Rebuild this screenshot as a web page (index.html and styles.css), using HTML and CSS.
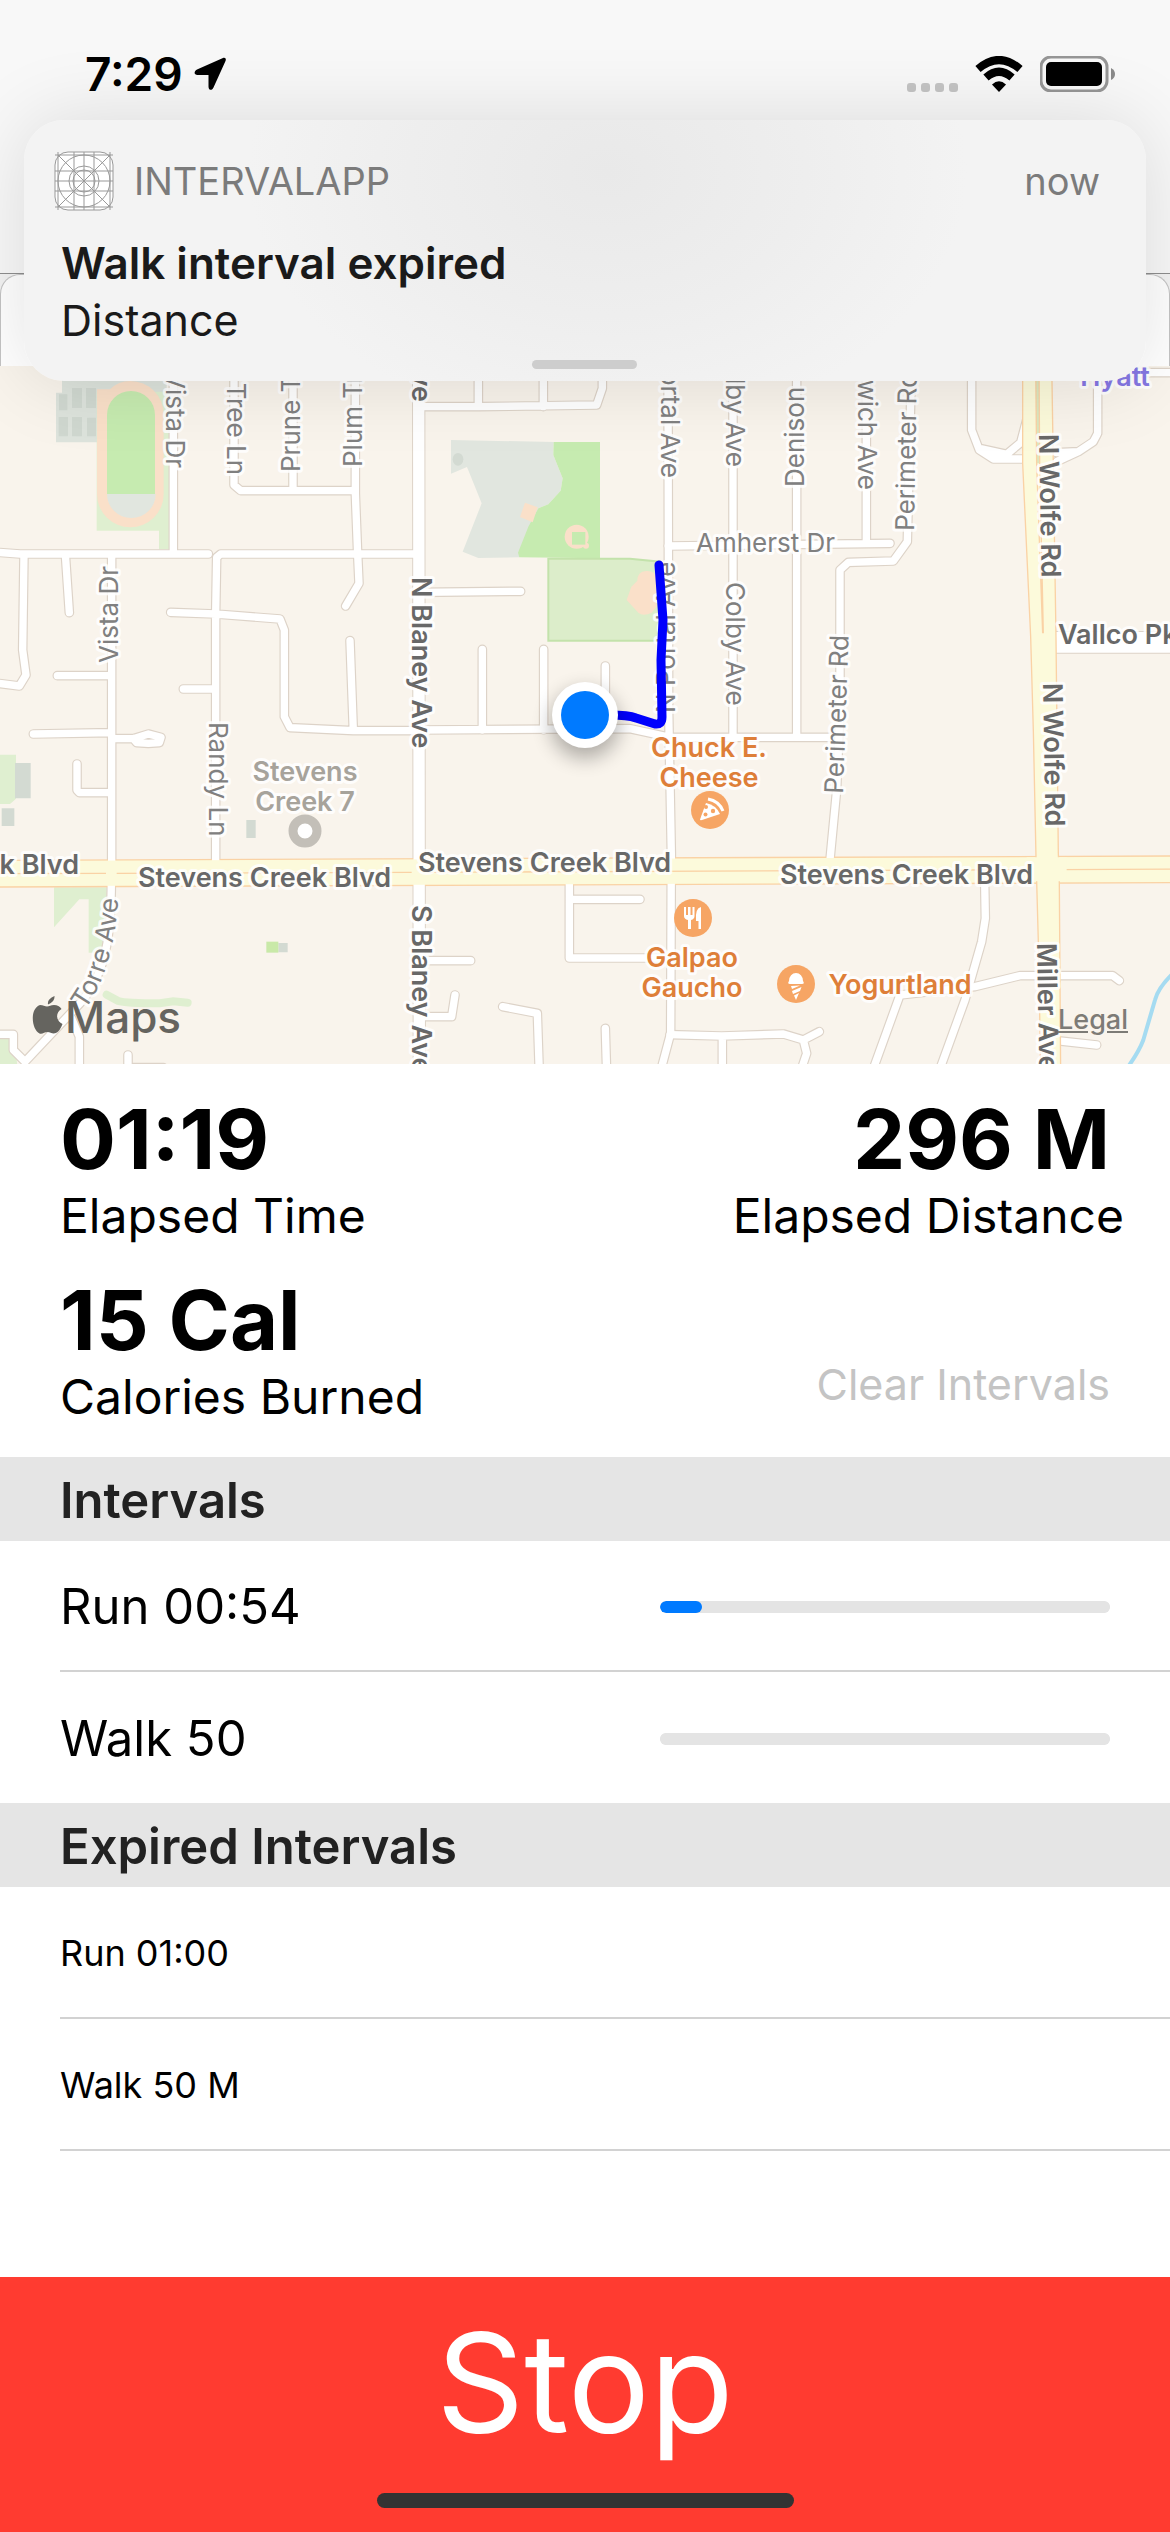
FILE: index.html
```html
<!DOCTYPE html>
<html lang="en">
<head>
<meta charset="utf-8">
<meta name="viewport" content="width=device-width, initial-scale=1">
<title>IntervalApp</title>
<link rel="stylesheet" href="styles.css">
</head>
<body>
<div class="app">
  <header class="top">
    <div class="status">
      <div class="status-left">
        <span>7:29</span>
        <svg class="arrow" viewBox="0 0 32 34" aria-hidden="true"><path d="M29 1 3 12.500C-.5 14.500 0 18 3.500 18H14.500V29.500C14.500 33.500 18 34 19.500 30.500L31.500 4C32.500 1.500 31 0 29 1z"/></svg>
      </div>
      <div class="status-right">
        <span class="signal"><i></i><i></i><i></i><i></i></span>
        <svg class="wifi" viewBox="0 0 48 36" aria-hidden="true"><path d="M24 36 17 28.500Q24 22 31 28.500z"/><path class="arc" d="M11 21.500Q24 10 37 21.500M3 13Q24-5 45 13"/></svg>
        <svg class="battery" viewBox="0 0 76 36" aria-hidden="true"><rect class="shell" x="1" y="1" width="66" height="34" rx="10"/><rect x="6" y="6" width="56" height="24" rx="5"/><path class="tip" d="M71 12Q75 14 75 18T71 24z"/></svg>
      </div>
    </div>
    <div class="toolbar"><div class="field"></div></div>
  </header>

  <section class="banner" role="alert">
    <div class="banner-head">
      <svg class="app-icon" viewBox="0 0 60 60" aria-hidden="true"><rect x="1" y="1" width="58" height="58" rx="13"/><path d="M4 1V59M20 1V59M30 1V59M40 1V59M56 1V59M1 4H59M1 20H59M1 30H59M1 40H59M1 56H59M4 4 56 56M56 4 4 56"/><circle cx="30" cy="30" r="26"/><circle cx="30" cy="30" r="15"/><circle cx="30" cy="30" r="11"/></svg>
      <span class="app-name">INTERVALAPP</span>
      <span class="when">now</span>
    </div>
    <h2>Walk interval expired</h2>
    <p>Distance</p>
    <div class="grabber"></div>
  </section>

  <div class="map">
    <svg class="map-canvas" viewBox="0 366 1170 698" preserveAspectRatio="xMidYMid slice" role="img" aria-label="Route map">
      <defs>
        <g id="roads">
          <path d="M520 1080V1662M702 1080V1455L722 1472H1066M879 1080V1472M1066 1080V1480L1073 1662 1077 1750 1037 1818M-20 1656 60 1662H625M1250 1662H662L650 1672 647 1840V2600M72 1662 68 1950 78 2025 58 2058-20 2048M196 1662 208 1838M335 1662V2600M172 2027H335M512 1837 647 1842 840 1857 853 1890V2150L870 2183 1060 2192H1250M550 2067H647M1050 1922 1060 2192M100 2202 335 2198M335 2216H400L445 2202 483 2212 478 2228 445 2230 410 2228 400 2216M231 2292V2370L238 2378H335"/>
          <path d="M334 2640C334 2800 320 2920 240 3010L75 3185M215 3055 238 3110V3220M-20 3103H40V3150L75 3185M384 3165V3220M384 3203H490"/>
          <path d="M1435 1080V1220M1630 1080V1220M1256 1220H1435L1790 1215 1807 1165V1080M1256 1777 1562 1774M1447 1948V2190M1631 1948V2190M1816 1998V2180M1256 2190 1890 2186 2010 2212H2490M2004 1080 2006 2130 2014 2560 2012 3100 1980 3220M2199 1080V2212M2004 1638 2670 1630M2390 1080V2212M2599 1080V1630M2735 1080 2722 1625 2680 1683 2545 1687 2520 1710V2130L2510 2370 2488 2600"/>
          <path d="M2915 1080V1290L2938 1350 2980 1377H3100M2938 1345 3020 1363 3062 1328 3080 1260M3293 1120V1300L3280 1325 3235 1355 3170 1358M3235 1355 3170 1385M3300 1118H3540"/>
          <path d="M2954 2640 2956 2755 2945 2825 2895 3000 2815 3220M2700 2985 2925 2960 3060 2927H3338L3358 2942M2700 2985 2615 3220M2010 3104 2165 3108 2350 3102 2410 3120 2458 3095M2410 3120 2420 3160 2400 3220M2167 3108V3220M3170 3122 3290 3135"/>
          <path d="M1708 2640V2874H2010M1708 2698H1920M1256 2882H1412M1256 3050H1355L1365 2985M1508 3020 1612 3040 1618 3220M1816 3085 1820 3220"/>
        </g>
        <path id="torre" d="M85 1010Q117 966 119 880"/>
        <filter id="soft" x="-50%" y="-50%" width="200%" height="200%"><feGaussianBlur stdDeviation="10"/></filter>
      </defs>

      <rect class="land" x="-400" y="366" width="2000" height="698"/>

      <g transform="scale(0.33333)">
        <!-- school grounds and running track -->
        <path fill="#dde3dc" d="M168 1178H186V1090H500V1180H291V1327H168z"/>
        <path fill="#dfefd0" d="M290 1592H477V1648H508V1175H290z"/>
        <path fill="#d0d8d0" d="M177 1183h25v48h-25zM216 1164h30v60h-30zM258 1164h30v60h-30zM176 1251h28v58h-28zM216 1251h30v58h-30zM261 1253h27v56h-27z"/>
        <path fill="#fae0c9" d="M291 1168H330Q355 1143 391 1143A100 100 0 0 1 491 1243V1482A100 100 0 0 1 291 1482z"/>
        <path fill="#c6ebb0" d="M321 1245A72 72 0 0 1 465 1245V1482H321z"/>
        <path fill="#e1e6df" d="M321 1482H467A73 72 0 0 1 321 1482z"/>
        <!-- parks -->
        <g transform="translate(1170 1110)">
          <path fill="#e1e6df" d="M183 210 491 216 490 255 518 325 512 362 475 403 445 415 415 480 388 562 265 564 218 545 275 400 231 291 183 311z"/>
          <ellipse fill="#d3dad2" cx="204" cy="268" rx="16" ry="19"/>
          <path fill="#c6ebb0" d="M491 216H630V565L388 562 384 548 415 470 445 415 475 403 512 362 518 325 490 255z"/>
          <path fill="#fae0c9" d="M405 398 443 412 428 457 390 441z"/>
          <circle fill="#fae0c9" cx="560" cy="500" r="36"/><circle fill="#fae0c9" cx="588" cy="527" r="9"/>
          <path fill="#c6ebb0" d="M546 486h40v38h-40z"/>
          <path fill="#dcedca" stroke="#c3e2ab" stroke-width="6" d="M475 566H720L810 575V812H475z"/>
          <path fill="#fae0c9" d="M742 632Q742 605 768 603T800 622V710L785 728Q760 740 745 728L710 690 724 650z"/>
        </g>
        <path fill="#dfefd0" d="M0 2264H48V2396L30 2412H0zM162 2662H320V2858H266V2698H238L162 2782zM0 3115H42L55 3220H0z"/>
        <path class="trail" d="M320 2984 355 3003Q375 3010 480 3010L520 3004 563 3008"/>
        <path fill="#d3dad2" d="M45 2289h47v106h-47zM5 2425h38v53h-38zM739 2460h28v54h-28zM835 2829h28v28h-28z"/>
        <path fill="#c9e9a8" d="M799 2825h36v33h-36z"/>
        <path class="river" d="M3530 2910Q3475 2960 3465 3000L3430 3120Q3415 3160 3370 3220"/>

        <use href="#roads" class="casing"/>
        <path class="casing wide" d="M1256 1080 1258 3220"/>
        <path class="casing vallco" d="M3168 1927H3540"/>
        <path class="arterial-edge" d="M-20 2621 3540 2608"/>
        <use href="#roads" class="street"/>
        <path class="street wide" d="M1256 1080 1258 3220"/>
        <path class="street vallco" d="M3168 1927H3540"/>
        <path class="arterial" d="M-20 2621 3540 2608"/>
        <path class="median" d="M-20 2621 318 2620M350 2620 1235 2617M1280 2617 3100 2609M3180 2609 3540 2607"/>
        <path class="boulevard" d="M3068 1080V1390L3092 1910 3100 2190 3108 2570 3116 2860 3122 3220H3182L3178 2650 3175 2560 3168 1910 3155 1080z"/>
        <path fill="#fcfadb" d="M3080 2572H3200V2644H3080z"/>
        <path fill="#dbe8c0" d="M3107 1080H3117V1390H3109z"/>
        <path class="median" d="M3107 1080 3110 1390 3128 1900M3117 1080 3119 1390 3130 1900"/>
      </g>

      <g class="label">
        <text transform="translate(166 468) rotate(90)" text-anchor="end">Vista Dr</text>
        <text transform="translate(227 475) rotate(90)" text-anchor="end">Tree Ln</text>
        <text transform="translate(300 472) rotate(-90)">Prune Tr</text>
        <text transform="translate(362 467) rotate(-90)">Plum Tr</text>
        <text transform="translate(118 663) rotate(-90)">Vista Dr</text>
        <text transform="translate(209 722) rotate(90)">Randy Ln</text>
        <text transform="translate(661 478) rotate(90)" text-anchor="end">Portal Ave</text>
        <text transform="translate(675 713) rotate(-90)">N Portal Ave</text>
        <text transform="translate(726 467) rotate(90)" text-anchor="end">Colby Ave</text>
        <text transform="translate(726 582) rotate(90)">Colby Ave</text>
        <text transform="translate(804 487) rotate(-90)">Denison</text>
        <text transform="translate(858 490) rotate(90)" text-anchor="end">wich Ave</text>
        <text transform="translate(914 531) rotate(-89)">Perimeter Rd</text>
        <text transform="translate(843 794) rotate(-88)">Perimeter Rd</text>
        <text x="696" y="552">Amherst Dr</text>
        <text><textPath href="#torre">Torre Ave</textPath></text>
      </g>
      <g class="label major">
        <text transform="translate(412 402) rotate(90)" text-anchor="end">Ave</text>
        <text transform="translate(412 577) rotate(90)">N Blaney Ave</text>
        <text transform="translate(412 905) rotate(90)">S Blaney Ave</text>
        <text transform="translate(1039 434) rotate(89)">N Wolfe Rd</text>
        <text transform="translate(1043 683) rotate(89)">N Wolfe Rd</text>
        <text transform="translate(1037 943) rotate(89)">Miller Ave</text>
        <text x="1058" y="644">Vallco Pkwy</text>
        <text x="79" y="874" text-anchor="end">Stevens Creek Blvd</text>
        <text x="138" y="887">Stevens Creek Blvd</text>
        <text x="418" y="872">Stevens Creek Blvd</text>
        <text x="780" y="884">Stevens Creek Blvd</text>
      </g>

      <g class="label place gray">
        <text x="305" y="781">Stevens</text><text x="305" y="811">Creek 7</text>
      </g>
      <circle cx="305" cy="831" r="12" fill="#fff" stroke="#c3bfb8" stroke-width="9"/>
      <text class="label place hotel" x="1115" y="386">Hyatt</text>

      <path class="route" d="M659 565 663 620 661 660 662 717Q662 725 655 724L636 718Q628 715 610 715"/>
      <circle cx="585" cy="724" r="34" fill="#000" opacity=".3" filter="url(#soft)"/>
      <circle cx="585" cy="715" r="33" fill="#fff"/>
      <circle cx="585" cy="715" r="24" fill="#007aff"/>

      <g class="label place">
        <text x="709" y="757">Chuck E.</text><text x="709" y="787">Cheese</text>
        <text x="692" y="967">Galpao</text><text x="692" y="997">Gaucho</text>
        <text x="900" y="994">Yogurtland</text>
      </g>
      <g fill="#f6a564"><circle cx="710" cy="810" r="19"/><circle cx="693" cy="918" r="19"/><circle cx="796" cy="984" r="19"/></g>
      <g fill="#fff">
        <path d="M700 819.500 706 803Q716 805 720 814L702 820Q700 820.500 700 819.500z"/>
        <path fill="none" stroke="#fff" stroke-width="3" d="M708 799Q719 801 723 811"/>
        <g fill="#f6a564"><circle cx="706" cy="807" r="2"/><circle cx="705.500" cy="814.500" r="2"/><circle cx="713" cy="811" r="2.200"/></g>
        <path d="M684 907h2v8h2v-8h2.500v8h2v-8h2v9Q694.500 919 691 920V929h-3V920Q684 919 684 916zM701 907V929h-2.500V921H696Q695 908 701 907z"/>
        <path d="M789 981A7 8 0 0 1 803 981Q805 984 802 984H790Q787 984 789 981zM791 986 800 985.500 792 989zM792 991 801.500 987 800 991 793 994zM794 995.500 799 993 796 1000z"/>
      </g>

      <g class="logo">
        <path d="M54.500 996Q55 1002 48 1004.500 47 999 54.500 996zM40 1005C43 1005 45 1006.500 47 1006.500S51 1005 54 1005Q59 1005 61.500 1009C55 1013 56 1021 62.500 1024Q60 1031 56 1033C52.500 1034.500 50.500 1032 47.500 1032S42.500 1034.500 39.500 1033.500C32 1030 29 1009 40 1005z"/>
        <text x="65" y="1033">Maps</text>
      </g>
    </svg>
    <a class="legal" href="#legal">Legal</a>
  </div>

  <section class="stats">
    <div class="stat"><strong>01:19</strong><span>Elapsed Time</span></div>
    <div class="stat end"><strong>296 M</strong><span>Elapsed Distance</span></div>
    <div class="stat"><strong>15 Cal</strong><span>Calories Burned</span></div>
    <button class="clear" type="button" disabled>Clear Intervals</button>
  </section>

  <main class="lists">
    <h3>Intervals</h3>
    <ul>
      <li><label for="run">Run 00:54</label><progress id="run" value="42" max="450"></progress></li>
      <li><label for="walk">Walk 50</label><progress id="walk" value="0" max="450"></progress></li>
    </ul>
    <h3>Expired Intervals</h3>
    <ul class="expired">
      <li>Run 01:00</li>
      <li>Walk 50 M</li>
    </ul>
  </main>

  <footer class="bottom">
    <button class="stop" type="button">Stop</button>
    <div class="home"></div>
  </footer>
</div>
</body>
</html>
```
FILE: styles.css
```css
* { box-sizing: border-box; }

body {
  margin: 0;
  background: #fff;
  color: #000;
  font-family: Inter, "Liberation Sans", sans-serif;
}

h2, h3, p, ul { margin: 0; padding: 0; font-size: inherit; }
ul { list-style: none; }
button { border: 0; padding: 0; background: none; font-family: inherit; }

.app {
  position: relative;
  display: flex;
  flex-direction: column;
  min-height: 100vh;
  overflow: hidden;
}

/* Status bar and toolbar */
.top {
  display: flex;
  flex-direction: column;
  height: 366px;
  background: #f8f8f8;
}
.status {
  display: flex;
  justify-content: space-between;
  height: 274px;
  padding: 46px 54px 0 85px;
  border-bottom: 1px solid #8e8e8e;
}
.status-left, .status-right {
  display: flex;
  align-items: center;
  height: 56px;
}
.status-left { gap: 11px; font-size: 46px; font-weight: 600; }
.status-right { gap: 17px; }
.arrow { width: 32px; height: 34px; }
.signal { display: flex; gap: 5px; padding-top: 26px; }
.signal i { width: 9px; height: 9px; border-radius: 3px; background: #c4c4c4; }
.wifi { width: 48px; height: 36px; }
.wifi .arc { fill: none; stroke: #000; stroke-width: 8; }
.battery { width: 76px; height: 36px; }
.battery .shell { fill: none; stroke: #969696; stroke-width: 3; }
.battery .tip { fill: #8a8a8a; }
.toolbar { flex: 1; display: flex; background: #f3f3f3; }
.field {
  flex: 1;
  border: 1px solid #c4c4c4;
  border-bottom: 0;
  border-radius: 20px 20px 0 0;
  background: #fff;
}

/* Notification */
.banner {
  position: absolute;
  z-index: 1;
  top: 120px;
  left: 24px;
  right: 24px;
  height: 261px;
  padding: 30px 46px 0 37px;
  border-radius: 40px;
  background: radial-gradient(ellipse 360px 260px at 52% 20%, #e9e9e9, #eeeeee 55%, #f3f3f3);
  box-shadow: 0 0 80px rgba(0, 0, 0, .12);
  color: #1a1a1a;
  font-size: 44px;
  line-height: 57px;
}
.banner-head {
  display: flex;
  align-items: center;
  height: 62px;
  margin-bottom: 23px;
  color: #7b7b7b;
  font-size: 38px;
}
.app-icon { width: 60px; height: 60px; margin: 0 20px 0 -7px; fill: #fff; stroke: #999; }
.app-icon path, .app-icon circle { fill: none; }
.when { margin-left: auto; }
.banner h2 { font-weight: 600; }
.banner p { font-size: 43px; }
.grabber {
  position: absolute;
  bottom: 12px;
  left: 50%;
  width: 105px;
  height: 9px;
  margin-left: -53px;
  border-radius: 5px;
  background: #cdcdcd;
}

/* Map */
.map { position: relative; height: 698px; }
.map-canvas { display: block; width: 100%; height: 100%; }
.land { fill: #f9f4ec; }
.casing, .street { fill: none; stroke-linecap: round; stroke-linejoin: round; }
.casing { stroke: #ddd3c8; stroke-width: 29; }
.street { stroke: #fff; stroke-width: 22; }
.casing.wide { stroke-width: 40; }
.street.wide { stroke-width: 34; }
.casing.vallco { stroke-width: 68; stroke-linecap: butt; }
.street.vallco { stroke-width: 62; stroke-linecap: butt; }
.arterial-edge { fill: none; stroke: #fad2a5; stroke-width: 84; }
.arterial { fill: none; stroke: #fcfadb; stroke-width: 76; }
.median { fill: none; stroke: #fad2a5; stroke-width: 4; }
.boulevard { fill: #fcfadb; stroke: #fad2a5; stroke-width: 4; }
.river { fill: none; stroke: #a5dbf1; stroke-width: 12; }
.trail { fill: none; stroke: #dfefd0; stroke-width: 24; stroke-linecap: round; }
.route { fill: none; stroke: #0000fd; stroke-width: 9; stroke-linecap: round; stroke-linejoin: round; }
.label {
  fill: #808080;
  stroke: rgba(255, 255, 255, .85);
  stroke-width: 6;
  stroke-linejoin: round;
  paint-order: stroke;
  font-size: 26px;
}
.label.major { fill: #686868; font-size: 27px; font-weight: 600; }
.label.place { fill: #de7f39; font-size: 27px; font-weight: 600; text-anchor: middle; }
.label.place.gray { fill: #a7a39b; }
.label.place.hotel { fill: #8577e3; }
.logo { fill: #65645f; font-size: 44px; font-weight: 500; }
.legal {
  position: absolute;
  right: 42px;
  bottom: 26px;
  color: #7d7b76;
  font-size: 27px;
  font-weight: 500;
  line-height: 36px;
}

/* Totals */
.stats {
  display: grid;
  grid-template-columns: auto auto;
  justify-content: space-between;
  row-gap: 27px;
  padding: 27px 46px 31px 60px;
}
.stat { display: flex; flex-direction: column; }
.stat strong { font-size: 83px; line-height: 96px; }
.stat span { font-size: 48px; line-height: 58px; }
.stat.end strong { align-self: flex-end; padding-right: 14px; }
.clear {
  align-self: end;
  justify-self: end;
  margin: 0 14px 14px 0;
  color: #c4c4c4;
  font-size: 43px;
  line-height: 56px;
}

/* Interval lists */
.lists { flex: 1; font-size: 49px; }
.lists h3 {
  padding: 14px 60px 10px;
  background: #e5e5e5;
  color: #222;
  font-weight: 600;
  line-height: 60px;
}
.lists li {
  display: flex;
  align-items: center;
  justify-content: space-between;
  height: 131px;
  margin-left: 60px;
  padding-top: 2px;
  padding-right: 60px;
  border-bottom: 2px solid #d2d2d2;
}
.lists ul:not(.expired) li:last-child { border-bottom: 0; }
.lists .expired li { height: 132px; font-size: 36px; }
progress {
  appearance: none;
  width: 450px;
  height: 12px;
  border: 0;
  border-radius: 6px;
  overflow: hidden;
  background: #e4e4e4;
}
progress::-webkit-progress-bar { background: #e4e4e4; border-radius: 6px; }
progress::-webkit-progress-value { background: #007aff; border-radius: 6px; }

/* Stop bar */
.bottom { position: relative; display: flex; background: #ff3b30; }
.stop {
  flex: 1;
  padding-bottom: 45px;
  color: #fff;
  font-size: 137px;
  line-height: 210px;
}
.home {
  position: absolute;
  bottom: 24px;
  left: 50%;
  width: 417px;
  height: 15px;
  margin-left: -208px;
  border-radius: 8px;
  background: #333;
}
```
